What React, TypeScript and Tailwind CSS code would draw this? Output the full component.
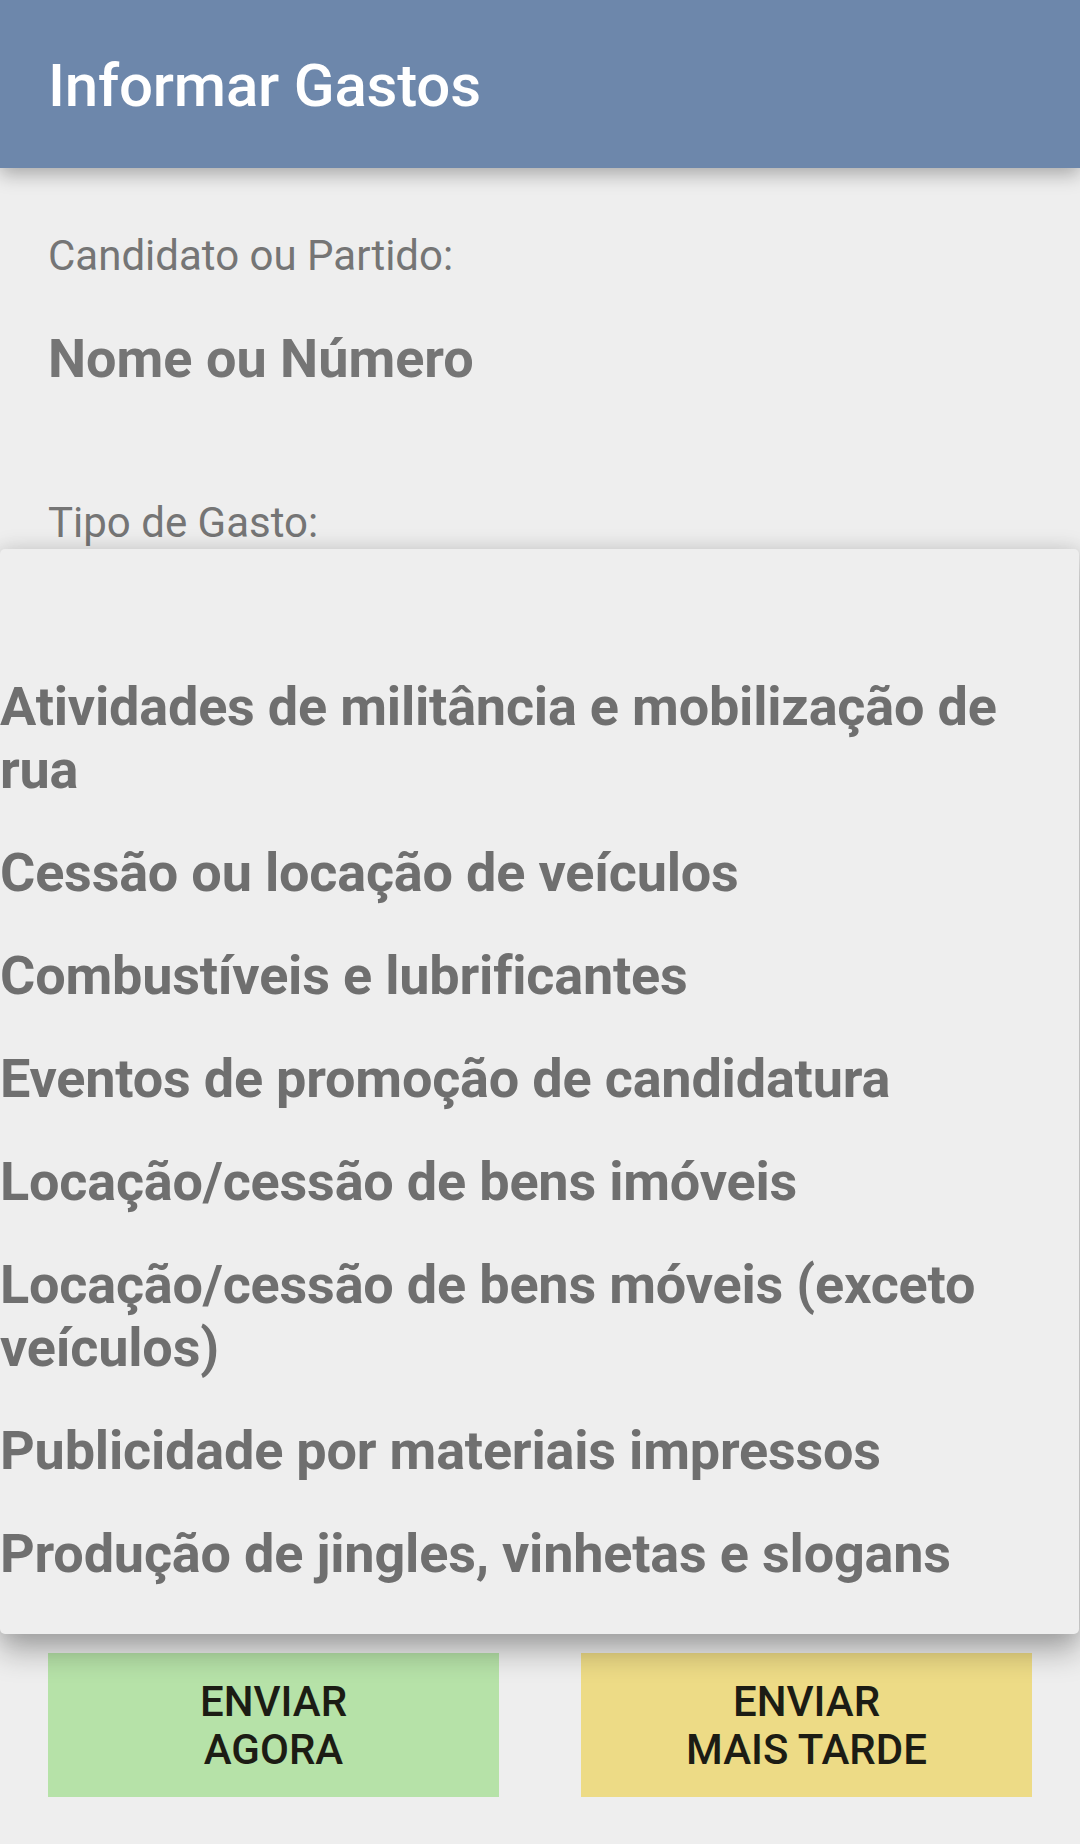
import React from "react";

const items: string[][] = [
  ["Atividades de militância e mobilização de", "rua"],
  ["Cessão ou locação de veículos"],
  ["Combustíveis e lubrificantes"],
  ["Eventos de promoção de candidatura"],
  ["Locação/cessão de bens imóveis"],
  ["Locação/cessão de bens móveis (exceto", "veículos)"],
  ["Publicidade por materiais impressos"],
  ["Produção de jingles, vinhetas e slogans"],
];

export default function App() {
  return (
    <div
      className="relative w-[1080px] h-[1844px] overflow-hidden bg-[#eeeeee]"
      style={{ fontFamily: "Roboto, 'Noto Sans', sans-serif" }}
    >
      <div className="relative z-10 h-[168px] bg-[#6d87ab] flex items-center pl-[48px] shadow-[0_6px_18px_rgba(0,0,0,0.3)]">
        <span className="mt-[4px] text-white text-[60px] font-medium leading-none tracking-[-0.2px]">Informar Gastos</span>
      </div>

      <div className="px-[48px] pt-[64px]">
        <div className="text-[42px] leading-[48px] text-[#757575]">Candidato ou Partido:</div>
        <div className="mt-[47px] text-[54px] leading-[64px] font-bold text-[#757575]">Nome ou Número</div>
        <div className="mt-[108px] text-[42px] leading-[48px] text-[#757575]">Tipo de Gasto:</div>
      </div>

      <div className="absolute left-[48px] top-[1653px] flex gap-[82px]">
        <div className="w-[451px] h-[144px] pt-[2px] bg-[#b6e2a8] flex items-center justify-center text-center text-[42px] leading-[48px] font-medium text-[#1c1c14]">
          ENVIAR<br />AGORA
        </div>
        <div className="w-[451px] h-[144px] pt-[2px] bg-[#eddb86] flex items-center justify-center text-center text-[42px] leading-[48px] font-medium text-[#1c1c14]">
          ENVIAR<br />MAIS TARDE
        </div>
      </div>

      <div className="absolute left-0 top-[549px] w-[1079px] h-[1085px] rounded-[5px] bg-[#eeeeee] shadow-[0_18px_30px_rgba(0,0,0,0.28),0_0_22px_rgba(0,0,0,0.14)] overflow-hidden">
        <div className="pt-[106px]">
          {items.map((lines, i) => (
            <div key={i} className="py-[20px] text-[54px] leading-[63px] font-bold text-[#6f6f6f] whitespace-nowrap tracking-[-0.2px]">
              {lines.map((l, j) => (
                <div key={j}>{l}</div>
              ))}
            </div>
          ))}
        </div>
      </div>
    </div>
  );
}
